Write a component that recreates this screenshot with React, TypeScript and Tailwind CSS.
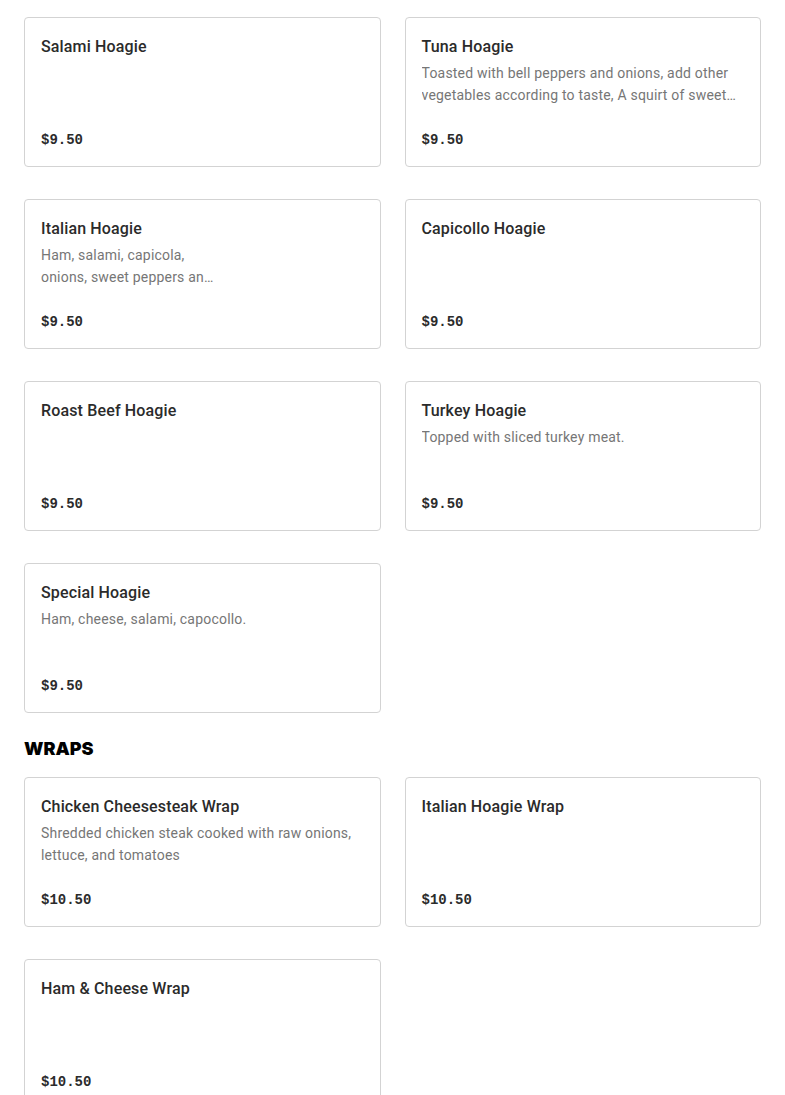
type Item = {
  name: string;
  description?: string;
  price: string;
  narrow?: boolean;
};

const hoagies: Item[] = [
  { name: "Salami Hoagie", price: "$9.50" },
  {
    name: "Tuna Hoagie",
    description:
      "Toasted with bell peppers and onions, add other vegetables according to taste, A squirt of sweet and hot sauce.",
    price: "$9.50",
  },
  {
    name: "Italian Hoagie",
    description: "Ham, salami, capicola, onions, sweet peppers and hot peppers.",
    price: "$9.50",
    narrow: true,
  },
  { name: "Capicollo Hoagie", price: "$9.50" },
  { name: "Roast Beef Hoagie", price: "$9.50" },
  { name: "Turkey Hoagie", description: "Topped with sliced turkey meat.", price: "$9.50" },
  { name: "Special Hoagie", description: "Ham, cheese, salami, capocollo.", price: "$9.50" },
];

const wraps: Item[] = [
  {
    name: "Chicken Cheesesteak Wrap",
    description: "Shredded chicken steak cooked with raw onions, lettuce, and tomatoes",
    price: "$10.50",
  },
  { name: "Italian Hoagie Wrap", price: "$10.50" },
  { name: "Ham & Cheese Wrap", price: "$10.50" },
];

function MenuCard({ item }: { item: Item }) {
  return (
    <div className="h-[150px] rounded border border-[#d3d3d3] bg-white px-4 pb-4 pt-[17px] flex flex-col">
      <h3 className="text-[16px] leading-6 font-medium tracking-[0.15px] text-[#2b2b2b]">{item.name}</h3>
      {item.description && (
        <p
          className={
            "mt-[3px] text-[14px] leading-[22px] tracking-[0.2px] text-[#767676] line-clamp-2 " +
            (item.narrow ? "w-[176px]" : "pr-2")
          }
        >
          {item.description}
        </p>
      )}
      <div className="mt-auto text-[14px] leading-5 font-bold text-[#2b2b2b] [font-family:'Liberation_Mono',monospace]">
        {item.price}
      </div>
    </div>
  );
}

export default function App() {
  return (
    <div className="min-h-screen bg-white px-6 pt-[17px] [font-family:Roboto,'Noto_Sans',sans-serif]">
      <section>
        <div className="grid grid-cols-2 gap-x-6 gap-y-8">
          {hoagies.map((item) => (
            <MenuCard key={item.name} item={item} />
          ))}
        </div>
      </section>

      <section className="mt-[26px]">
        <h2 className="mb-[18px] text-[18px] leading-5 font-black uppercase text-black [font-family:Inter,sans-serif]">
          Wraps
        </h2>
        <div className="grid grid-cols-2 gap-x-6 gap-y-8">
          {wraps.map((item) => (
            <MenuCard key={item.name} item={item} />
          ))}
        </div>
      </section>
    </div>
  );
}
